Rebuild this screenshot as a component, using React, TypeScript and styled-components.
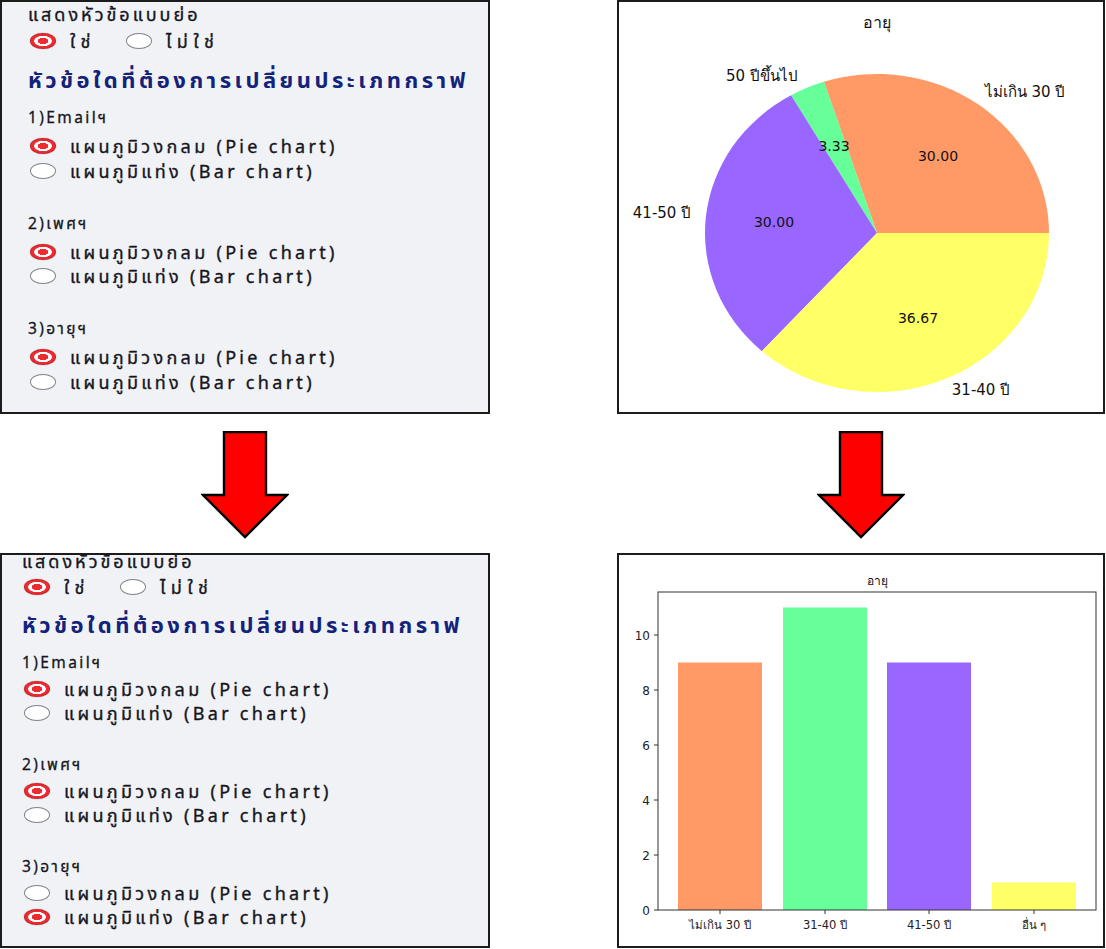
import React from "react";
import styled, { createGlobalStyle } from "styled-components";

const Global = createGlobalStyle`
  html, body { margin: 0; padding: 0; background: #ffffff; }
  body { font-family: "Noto Sans", "Noto Sans Thai", "DejaVu Sans", sans-serif; color: #262730; }
`;

const Page = styled.div`
  display: grid;
  grid-template-columns: 490px 488px;
  grid-template-rows: 414px 139px 395px;
  column-gap: 127px;
  width: 1105px;
`;

const FormPanel = styled.section<{ $shift: number; $indent: number }>`
  box-sizing: border-box;
  border: 2px solid #1c1c1c;
  background: #f0f2f6;
  overflow: hidden;
  padding: 0 0 0 ${(p) => p.$indent}px;
  & > :first-child { margin-top: ${(p) => p.$shift}px; }
`;

const ChartPanel = styled.section`
  box-sizing: border-box;
  border: 2px solid #1c1c1c;
  background: #ffffff;
  overflow: hidden;
  display: flex;
`;

const ChartSvg = styled.svg`
  width: 100%;
  height: 100%;
  display: block;
  font-family: "DejaVu Sans", "Noto Sans", sans-serif;
`;

const Caption = styled.div`
  font-size: 18px;
  line-height: 24px;
  letter-spacing: 3px;
  height: 24px;
  color: #15161d;
  -webkit-text-stroke: 0.35px #15161d;
  white-space: nowrap;
`;

const RadioRow = styled.div<{ $gap?: number; $top?: number }>`
  display: flex;
  align-items: center;
  gap: ${(p) => p.$gap ?? 0}px;
  margin-top: ${(p) => p.$top ?? 0}px;
  height: 24px;
`;

const Option = styled.label<{ $wide?: boolean }>`
  display: flex;
  align-items: center;
  gap: 14px;
  font-size: 18px;
  line-height: 24px;
  letter-spacing: ${(p) => (p.$wide ? 3.3 : 5.5)}px;
  color: #15161d;
  -webkit-text-stroke: 0.35px #15161d;
  padding-left: 2px;
  white-space: nowrap;
`;

const Dot = styled.span<{ $on: boolean }>`
  box-sizing: border-box;
  width: 26px;
  height: 16px;
  border-radius: 50%;
  flex: none;
  border: 1px solid ${(p) => (p.$on ? "#c91f24" : "#7f8188")};
  background: ${(p) =>
    p.$on
      ? "radial-gradient(ellipse at center, #ee2b30 0 30%, #ffffff 33% 50%, #ee2b30 54%)"
      : "#ffffff"};
  box-shadow: ${(p) => (p.$on ? "0 0 1px rgba(0,0,0,0.5)" : "none")};
`;

const Heading = styled.h2<{ $top: number }>`
  margin: ${(p) => p.$top}px 0 0 0;
  font-size: 22px;
  line-height: 30px;
  font-weight: 700;
  letter-spacing: 3.5px;
  color: #13227a;
  white-space: nowrap;
`;

const Question = styled.div<{ $top: number }>`
  margin-top: ${(p) => p.$top}px;
  font-size: 15.5px;
  line-height: 22px;
  letter-spacing: 2.4px;
  color: #15161d;
  -webkit-text-stroke: 0.3px #15161d;
`;

const OptionList = styled.div<{ $top: number; $step: number }>`
  display: flex;
  flex-direction: column;
  margin-top: ${(p) => p.$top}px;
  & > * + * { margin-top: ${(p) => p.$step - 24}px; }
`;

const ArrowCell = styled.div`
  display: flex;
  justify-content: center;
  align-items: flex-start;
  padding-top: 17px;
`;

type Layout = {
  shift: number;
  indent: number;
  radioTop: number;
  headTop: number;
  q: number[];
  listTop: number;
  step: number;
  pieLast: boolean;
};

const questions = ["1)Emailฯ", "2)เพศฯ", "3)อายุฯ"];

function Form({ l }: { l: Layout }) {
  return (
    <FormPanel $shift={l.shift} $indent={l.indent}>
      <Caption>แสดงหัวข้อแบบย่อ</Caption>
      <RadioRow $gap={28} $top={l.radioTop}>
        <Option>
          <Dot $on />
          ใช่
        </Option>
        <Option>
          <Dot $on={false} />
          ไม่ใช่
        </Option>
      </RadioRow>
      <Heading $top={l.headTop}>หัวข้อใดที่ต้องการเปลี่ยนประเภทกราฟ</Heading>
      {questions.map((q, i) => {
        const barOn = l.pieLast && i === 2;
        return (
          <React.Fragment key={q}>
            <Question $top={l.q[i]}>{q}</Question>
            <OptionList $top={l.listTop} $step={l.step}>
              <Option $wide>
                <Dot $on={!barOn} />
                แผนภูมิวงกลม (Pie chart)
              </Option>
              <Option $wide>
                <Dot $on={barOn} />
                แผนภูมิแท่ง (Bar chart)
              </Option>
            </OptionList>
          </React.Fragment>
        );
      })}
    </FormPanel>
  );
}

function DownArrow() {
  return (
    <svg width="88" height="108" viewBox="0 0 88 108">
      <polygon
        points="23,1 65,1 65,64 86,64 44,106 2,64 23,64"
        fill="#ff0000"
        stroke="#000000"
        strokeWidth="2.4"
        strokeLinejoin="miter"
      />
    </svg>
  );
}

const slices = [
  { v: 30, color: "#ff9966", label: "ไม่เกิน 30 ปี", lx: 406, ly: 90, pct: "30.00", px: 319, py: 154 },
  { v: 3.33, color: "#66ff99", label: "50 ปีขึ้นไป", lx: 143, ly: 74, pct: "3.33", px: 215, py: 144 },
  { v: 30, color: "#9966ff", label: "41-50 ปี", lx: 43, ly: 211, pct: "30.00", px: 155, py: 220 },
  { v: 36.67, color: "#ffff66", label: "31-40 ปี", lx: 362, ly: 388, pct: "36.67", px: 299, py: 316 },
];

function PieChart() {
  const cx = 258;
  const cy = 231;
  const rx = 172;
  const ry = 159;
  const total = slices.reduce((s, x) => s + x.v, 0);
  let start = 0;
  const pt = (a: number) => [cx + rx * Math.cos(a), cy - ry * Math.sin(a)];
  return (
    <ChartSvg viewBox="0 0 484 410" preserveAspectRatio="none">
      <text x={258} y={26} textAnchor="middle" fontSize={16} fill="#111">
        อายุ
      </text>
      {slices.map((s) => {
        const a0 = start;
        const a1 = start + (s.v / total) * Math.PI * 2;
        start = a1;
        const [x0, y0] = pt(a0);
        const [x1, y1] = pt(a1);
        const large = a1 - a0 > Math.PI ? 1 : 0;
        return (
          <path
            key={s.label}
            d={`M${cx},${cy} L${x0},${y0} A${rx},${ry} 0 ${large} 0 ${x1},${y1} Z`}
            fill={s.color}
          />
        );
      })}
      {slices.map((s) => (
        <React.Fragment key={s.pct + s.label}>
          <text x={s.lx} y={s.ly + 5} textAnchor="middle" fontSize={15} fill="#111">
            {s.label}
          </text>
          <text x={s.px} y={s.py + 5} textAnchor="middle" fontSize={14} fill="#111">
            {s.pct}
          </text>
        </React.Fragment>
      ))}
    </ChartSvg>
  );
}

const bars = [
  { v: 9, color: "#ff9966", label: "ไม่เกิน 30 ปี", x: 59 },
  { v: 11, color: "#66ff99", label: "31-40 ปี", x: 164 },
  { v: 9, color: "#9966ff", label: "41-50 ปี", x: 268 },
  { v: 1, color: "#ffff66", label: "อื่น ๆ", x: 373 },
];

function BarChart() {
  const y0 = 355;
  const unit = 27.5;
  const w = 84;
  return (
    <ChartSvg viewBox="0 0 484 391" preserveAspectRatio="none">
      <text x={258} y={30} textAnchor="middle" fontSize={12} fill="#111">
        อายุ
      </text>
      {bars.map((b) => (
        <rect key={b.label} x={b.x} y={y0 - b.v * unit} width={w} height={b.v * unit} fill={b.color} />
      ))}
      <rect x={39} y={37} width={438} height={318} fill="none" stroke="#333" strokeWidth={1} />
      {[0, 2, 4, 6, 8, 10].map((v) => (
        <g key={v}>
          <line x1={35} x2={39} y1={y0 - v * unit} y2={y0 - v * unit} stroke="#333" />
          <text x={31} y={y0 - v * unit + 4.5} textAnchor="end" fontSize={12} fill="#222">
            {v}
          </text>
        </g>
      ))}
      {bars.map((b) => (
        <g key={"t" + b.label}>
          <line x1={b.x + w / 2} x2={b.x + w / 2} y1={355} y2={359} stroke="#333" />
          <text x={b.x + w / 2} y={374} textAnchor="middle" fontSize={11.5} fill="#222">
            {b.label}
          </text>
        </g>
      ))}
    </ChartSvg>
  );
}

const topLayout: Layout = {
  shift: 0,
  indent: 26,
  radioTop: 3,
  headTop: 11,
  q: [12, 29, 29],
  listTop: 6,
  step: 24.5,
  pieLast: false,
};

const bottomLayout: Layout = {
  shift: -6,
  indent: 20,
  radioTop: 2,
  headTop: 10,
  q: [12, 28, 28],
  listTop: 4,
  step: 24,
  pieLast: true,
};

export default function App() {
  return (
    <>
      <Global />
      <Page>
        <Form l={topLayout} />
        <ChartPanel>
          <PieChart />
        </ChartPanel>
        <ArrowCell>
          <DownArrow />
        </ArrowCell>
        <ArrowCell>
          <DownArrow />
        </ArrowCell>
        <Form l={bottomLayout} />
        <ChartPanel>
          <BarChart />
        </ChartPanel>
      </Page>
    </>
  );
}
